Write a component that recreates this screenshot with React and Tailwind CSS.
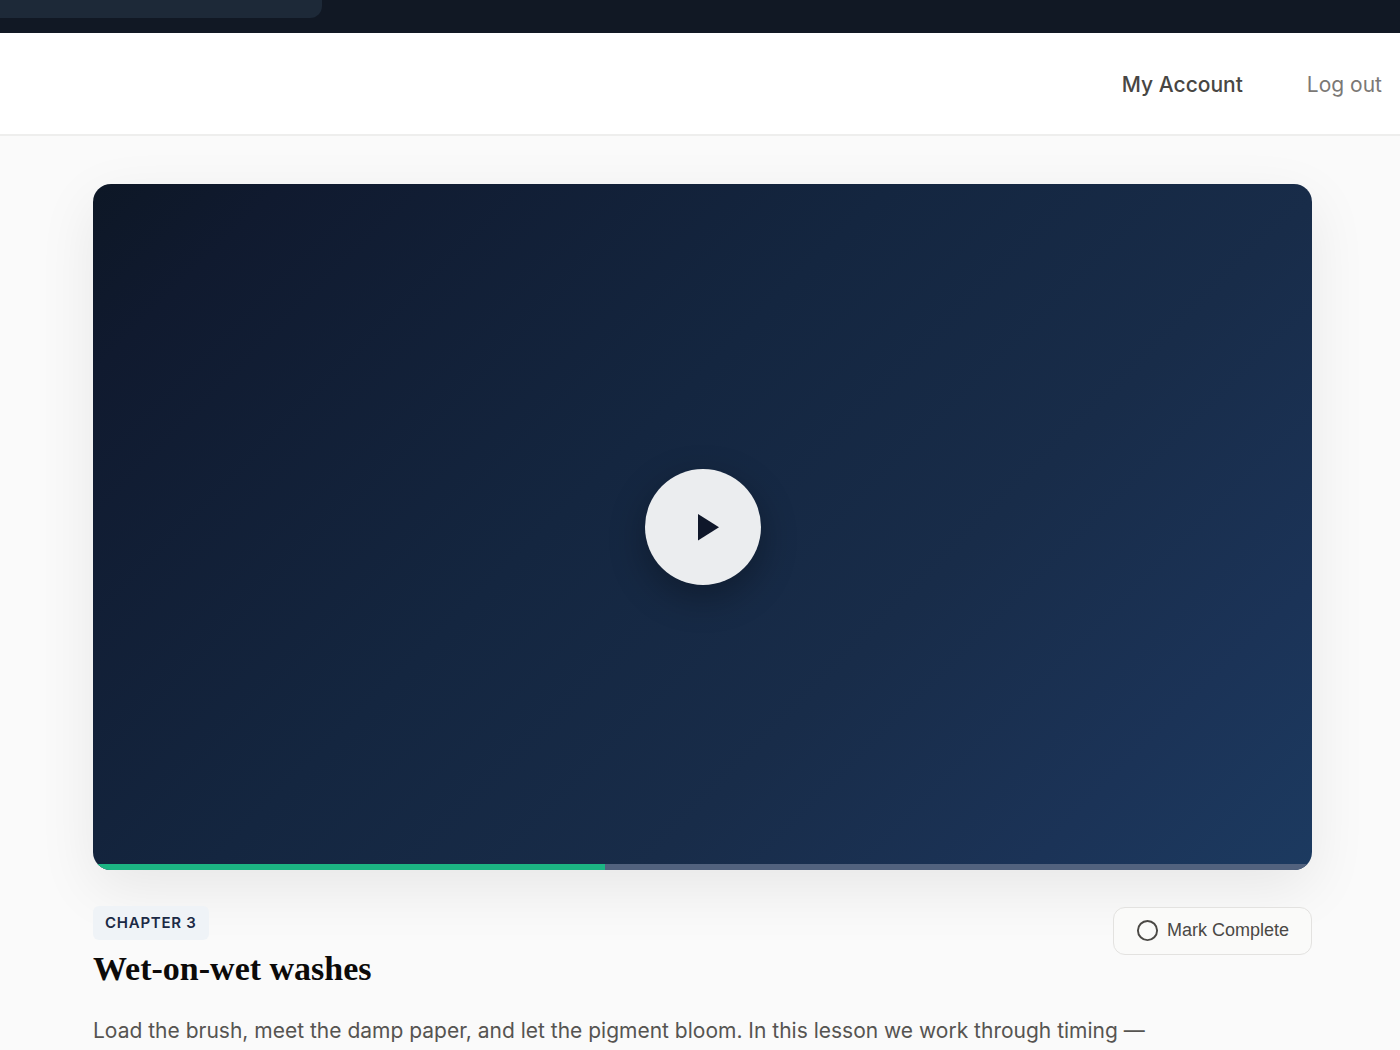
import { Circle } from 'lucide-react';

const lesson = {
  chapter: 'Chapter 3',
  title: 'Wet-on-wet washes',
  description:
    'Load the brush, meet the damp paper, and let the pigment bloom. In this lesson we work through timing —',
  progress: 42,
};

const BrowserBar = () => (
  <div className="h-[33px] bg-[#111824]">
    <div className="h-[18px] w-[23%] min-w-60 rounded-br-xl bg-[#1d2938]" />
  </div>
);

const Header = () => (
  <header className="border-b-2 border-[#eeeeed] bg-white">
    <nav className="flex items-center justify-end gap-16 pt-9 pr-[18px] pb-[33px] text-[21px] leading-8">
      <a href="#account" className="font-medium text-[#484643]">My Account</a>
      <a href="#logout" className="text-[#7b7875]">Log out</a>
    </nav>
  </header>
);

const VideoPlayer = ({ progress }) => (
  <div className="flex aspect-video flex-col overflow-hidden rounded-[18px] bg-linear-[135deg,#0d1726_0%,#101a2f_10%,#142640_42%,#182c49_65%,#1b3357_85%,#1c3a60_100%] shadow-[0_18px_58px_rgba(0,0,0,0.08)]">
    <div className="flex flex-1 items-center justify-center pt-[6px]">
      <button
        aria-label="Play lesson"
        className="flex size-[116px] items-center justify-center rounded-full bg-[#ebedef] shadow-[0_12px_36px_rgba(0,0,0,0.3)]"
      >
        <svg viewBox="0 0 32 32" className="size-8 text-[#0f172a]" fill="currentColor">
          <path d="M11 3v26.500L32 16.200z" />
        </svg>
      </button>
    </div>

    {/* Progress */}
    <div className="h-[6px] bg-[#52627e]">
      <div className="h-full bg-[#1cb583]" style={{ width: `${progress}%` }} />
    </div>
  </div>
);

const LessonInfo = ({ chapter, title, description }) => (
  <section className="pt-9">
    <div className="flex items-start justify-between">
      <div>
        <span className="inline-block rounded-md bg-[#eff3f7] px-3 text-[15px] leading-[34px] font-semibold tracking-wider text-[#1b2a45] uppercase">
          {chapter}
        </span>
        <h1 className="mt-[9px] font-['Liberation_Serif',serif] text-[34px] leading-10 font-bold text-[#0c0a09]">
          {title}
        </h1>
      </div>
      <button className="mt-px flex h-12 items-center gap-2 rounded-xl border border-[#e3e2e0] bg-[#fafaf9] px-[22px] font-['Liberation_Sans',sans-serif] text-[18px] text-[#4a4845]">
        <Circle size={23} strokeWidth={2} aria-hidden="true" />
        Mark Complete
      </button>
    </div>
    <p className="mt-6 text-[21px] leading-9 text-[#565451]">{description}</p>
  </section>
);

const App = () => {
  return (
    <div className="h-screen overflow-hidden bg-[#fafafa] font-['Inter',sans-serif]">
      <BrowserBar />
      <Header />
      <main className="pt-12 pr-[88px] pl-[93px]">
        <VideoPlayer progress={lesson.progress} />
        <LessonInfo
          chapter={lesson.chapter}
          title={lesson.title}
          description={lesson.description}
        />
      </main>
    </div>
  );
};

export default App;
